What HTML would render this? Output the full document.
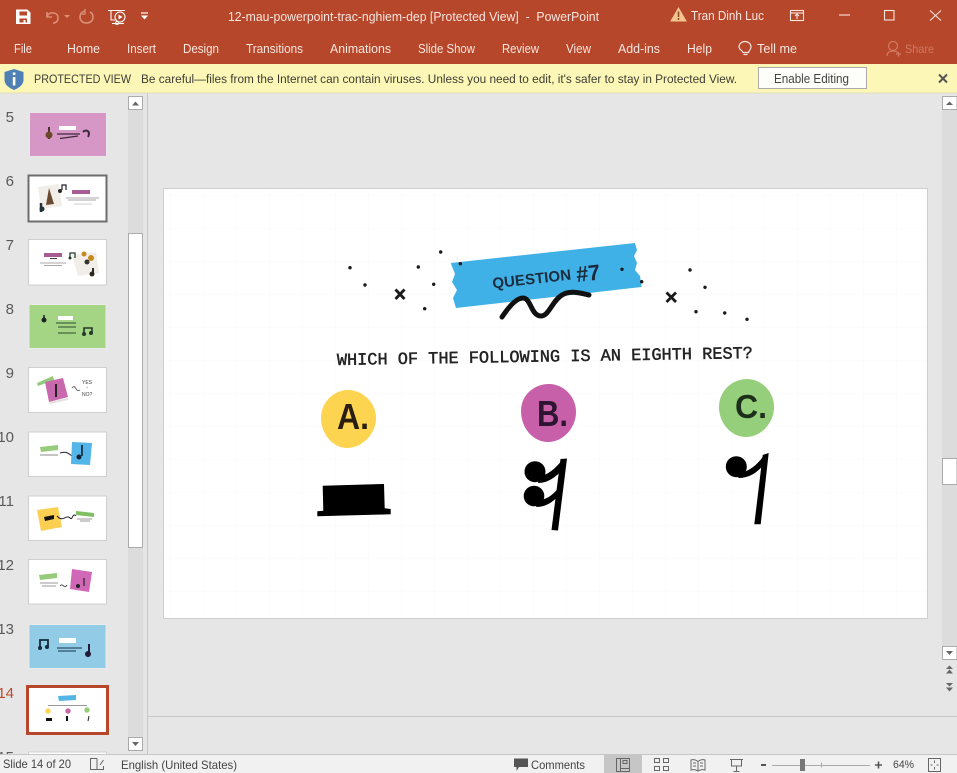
<!DOCTYPE html>
<html><head><meta charset="utf-8"><style>
html,body{margin:0;padding:0;background:#e6e6e6;overflow:hidden}
svg{display:block}
text{font-family:"Liberation Sans",sans-serif;font-size:12px}
.r text{fill:#f8e6e0;font-size:12.5px}
.y text{fill:#3d3d33;font-size:12.3px}
.s text{fill:#444}
.n{font-size:15px;fill:#5a5a5a;text-anchor:end}
</style></head><body>
<svg width="957" height="773" viewBox="0 0 957 773" xmlns="http://www.w3.org/2000/svg">
<defs>
<pattern id="g" width="33" height="33" patternUnits="userSpaceOnUse" x="170" y="195"><path d="M33 0H0V33" fill="none" stroke="#fafafa" stroke-width="1"/></pattern>
</defs>
<rect width="957" height="773" fill="#e6e6e6"/>

<!-- title bar -->
<rect width="957" height="64" fill="#b7472a"/>
<path fill-rule="evenodd" d="M16 9.500H27.500L30.500 12.500V24H16ZM19.500 11.500V15.500H27V11.500ZM19.500 18.500V22.500H27V18.500Z" fill="#fff"/>
<rect x="23.500" y="20" width="2" height="2.500" fill="#fff"/>
<g fill="none" stroke="#d98f78" stroke-width="1.600">
<path d="M47 12V17H52"/><path d="M47 16C50 11 58 12 58 18C58 21 56 23 53 23"/>
<path d="M64 15L70 15L67 18Z" fill="#d98f78" stroke="none"/>
<path d="M85 11C81 12 80 15 80 17C80 21 83 23 86.500 23C90 23 93 21 93 17C93 15 92 13 90 12"/><path d="M85 9V14H80" stroke-width="1.300"/>
</g>
<g fill="none" stroke="#fff" stroke-width="1.100">
<path d="M108 10.500H125"/><path d="M111 11V20H115"/><circle cx="120" cy="17" r="5"/><path d="M118.500 14.500L122.500 17L118.500 19.500Z" fill="#fff" stroke="none"/><path d="M112 23.500H124"/><circle cx="117" cy="23" r="1.500"/>
</g>
<path d="M141 13H148" stroke="#fff" stroke-width="1.200"/><path d="M141 15.500H148L144.500 19.500Z" fill="#fff"/>
<g class="r">
<text x="228" y="21" textLength="371" lengthAdjust="spacingAndGlyphs" xml:space="preserve">12-mau-powerpoint-trac-nghiem-dep [Protected View]  -  PowerPoint</text>
<text x="691" y="20" textLength="73" lengthAdjust="spacingAndGlyphs">Tran Dinh Luc</text>
<text x="14" y="53" textLength="18" lengthAdjust="spacingAndGlyphs">File</text>
<text x="67" y="53" textLength="33" lengthAdjust="spacingAndGlyphs">Home</text>
<text x="127" y="53" textLength="29" lengthAdjust="spacingAndGlyphs">Insert</text>
<text x="183" y="53" textLength="36" lengthAdjust="spacingAndGlyphs">Design</text>
<text x="246" y="53" textLength="57" lengthAdjust="spacingAndGlyphs">Transitions</text>
<text x="330" y="53" textLength="61" lengthAdjust="spacingAndGlyphs">Animations</text>
<text x="418" y="53" textLength="57" lengthAdjust="spacingAndGlyphs">Slide Show</text>
<text x="502" y="53" textLength="37" lengthAdjust="spacingAndGlyphs">Review</text>
<text x="566" y="53" textLength="25" lengthAdjust="spacingAndGlyphs">View</text>
<text x="618" y="53" textLength="42" lengthAdjust="spacingAndGlyphs">Add-ins</text>
<text x="687" y="53" textLength="25" lengthAdjust="spacingAndGlyphs">Help</text>
<text x="757" y="53" textLength="40" lengthAdjust="spacingAndGlyphs">Tell me</text>
</g>
<text x="905" y="53" textLength="29" lengthAdjust="spacingAndGlyphs" fill="#cf7a62">Share</text>
<g fill="none" stroke="#cf7a62" stroke-width="1.200"><circle cx="893" cy="46" r="4.500"/><path d="M887 56C887 52 890 51 893 51C896 51 898 52 899 54"/><path d="M896 54H901M898.500 52V56.500"/></g>
<path d="M745 41.500C748.500 41.500 751 44 751 47C751 49.500 749 50.500 748.500 52.500H743C742.500 50.500 739 49.500 739 47C739 44 741.500 41.500 745 41.500Z" fill="none" stroke="#f8e6e0" stroke-width="1.200"/>
<path d="M743.500 54.500H747.500" stroke="#f8e6e0" stroke-width="1.200"/>
<path d="M678.500 8L686 21H671Z" fill="#f2c48e" stroke="#f2c48e"/><path d="M678.500 11.500V17M678.500 18V20" stroke="#8a4a2a" stroke-width="1.500"/>
<g fill="none" stroke="#f8e6e0" stroke-width="1.100">
<rect x="790.500" y="10.500" width="13" height="10"/><path d="M790.500 13H803.500"/><path d="M797 19V14.500M795 16L797 14L799 16"/>
<path d="M839 15H850"/><rect x="884.500" y="10.500" width="9.500" height="9.500"/><path d="M930 10.500L941 20.500M941 10.500L930 20.500"/>
</g>

<!-- protected view bar -->
<rect y="64" width="957" height="28.500" fill="#fcf7b7"/>
<rect y="92.500" width="957" height="1" fill="#e0dfb8"/>
<path d="M14 69L23.500 72V80C23.500 84.500 19 88 14 90C9 88 4.500 84.500 4.500 80V72Z" fill="#4e7fb5"/>
<rect x="12.800" y="72.500" width="2.600" height="2.600" fill="#fff"/><rect x="12.800" y="77" width="2.600" height="8.500" fill="#fff"/>
<g class="y">
<text x="34" y="83" textLength="97" lengthAdjust="spacingAndGlyphs">PROTECTED VIEW</text>
<text x="141" y="83" textLength="596" lengthAdjust="spacingAndGlyphs">Be careful—files from the Internet can contain viruses. Unless you need to edit, it's safer to stay in Protected View.</text>
</g>
<rect x="758.500" y="67.500" width="108" height="21" fill="#fdfdfa" stroke="#ababab"/>
<text x="774" y="83" textLength="75" lengthAdjust="spacingAndGlyphs" fill="#444" style="font-size:12.500px">Enable Editing</text>
<path d="M939 74.500L947 82.500M947 74.500L939 82.500" stroke="#555" stroke-width="2"/>

<!-- left panel -->
<rect x="147" y="93" width="1" height="661" fill="#c9c9c9"/>
<rect x="128" y="96" width="15" height="655" fill="#dcdcdc"/>
<rect x="128.500" y="96.500" width="14" height="13" fill="#fff" stroke="#ababab"/>
<path d="M132 105.500H139L135.500 101.500Z" fill="#666"/>
<rect x="128.500" y="233.500" width="14" height="314" fill="#fff" stroke="#ababab"/>
<rect x="128.500" y="737.500" width="14" height="13" fill="#fff" stroke="#ababab"/>
<path d="M132 742H139L135.500 746Z" fill="#666"/>

<text class="n" x="14" y="122">5</text>
<text class="n" x="14" y="186">6</text>
<text class="n" x="14" y="250">7</text>
<text class="n" x="14" y="314">8</text>
<text class="n" x="14" y="378">9</text>
<text class="n" x="14" y="442">10</text>
<text class="n" x="14" y="506">11</text>
<text class="n" x="14" y="570">12</text>
<text class="n" x="14" y="634">13</text>
<text class="n" x="14" y="698" style="fill:#c0492b">14</text>
<text class="n" x="14" y="762">15</text>

<!-- thumb 5 -->
<rect x="29.500" y="112.500" width="77" height="44" fill="#d797c6" stroke="#e9e9e9"/>
<rect x="59" y="126" width="17" height="4" fill="#fff"/>
<path d="M57 134H80M60 138.500L78 136" stroke="#3c2a3c" stroke-width="1.200"/>
<path d="M49 127V139" stroke="#3a2a20" stroke-width="1.800"/><circle cx="49" cy="135" r="3.500" fill="#6a4a28"/>
<path d="M83 132C86 129 91 131 88 137" fill="none" stroke="#3c2a3c" stroke-width="2"/>
<!-- thumb 6 -->
<rect x="28.500" y="175.500" width="78" height="46" fill="#fff" stroke="#6d6d6d" stroke-width="2"/>
<path d="M38 187L59 184L62 206L41 209Z" fill="#f1eeea"/><path d="M46 205L49 188L54 204Z" fill="#6b4a32"/>
<circle cx="60" cy="191" r="2" fill="#2a2a2a"/><path d="M62 190V185H66V190" fill="none" stroke="#222" stroke-width="1.200"/>
<path d="M41 203V212" stroke="#24323a" stroke-width="2.500"/><circle cx="42" cy="209" r="2.500" fill="#24323a"/>
<rect x="72" y="190" width="18" height="4" fill="#a65d96"/>
<path d="M66 198H99M68 200H96" stroke="#aaa" stroke-width="1"/><path d="M74 204H92" stroke="#ccc"/>
<!-- thumb 7 -->
<rect x="28.500" y="239.500" width="78" height="45.500" fill="#fff" stroke="#cfcfcf"/>
<rect x="44" y="253" width="18" height="4" fill="#a65d96"/><path d="M50 258.500H57" stroke="#444"/>
<path d="M40 263H66M44 265.500H62" stroke="#aaa"/>
<path d="M72 255L96 252L99 273L78 276Z" fill="#f1eeea"/><circle cx="84" cy="254" r="2.500" fill="#c58a1e"/><circle cx="91" cy="258" r="3" fill="#c58a1e"/><circle cx="87" cy="262" r="2.500" fill="#333"/>
<path d="M70 258V253H75V258" fill="none" stroke="#2a3a2a" stroke-width="1.300"/><circle cx="70" cy="258" r="1.500" fill="#2a3a2a"/>
<circle cx="92" cy="274" r="2.500" fill="#2a2a1f"/><path d="M93 268V274" stroke="#2a2a1f" stroke-width="2"/>
<!-- thumb 8 -->
<rect x="29" y="304.500" width="77" height="44" fill="#a3d585" stroke="#eaeaea"/>
<rect x="58" y="316" width="15" height="4" fill="#fff"/><path d="M56 323H76M58 327H76M58 333H76" stroke="#2f4a2a"/>
<circle cx="44" cy="320" r="2.500" fill="#222"/><path d="M44 315V322" stroke="#222" stroke-width="1.500"/>
<path d="M84 334V328H92V334" fill="none" stroke="#243a2a" stroke-width="1.600"/><circle cx="84" cy="334" r="2" fill="#243a2a"/><circle cx="91" cy="333" r="2" fill="#243a2a"/>
<!-- thumb 9 -->
<rect x="28.500" y="367.500" width="78" height="45" fill="#fff" stroke="#cfcfcf"/>
<path d="M37 383L53 376L54 380L38 386Z" fill="#93c97a"/>
<path d="M45 382L63 378L68 397L49 402Z" fill="#c968ad"/><path d="M56 384V397" stroke="#222" stroke-width="2"/>
<path d="M49 402L68 398L68 400L50 404Z" fill="#e4e0de"/>
<path d="M72 388C76 383 75 393 80 390" fill="none" stroke="#666"/>
<text x="82" y="384" style="font-size:5px" fill="#444">YES</text><text x="86" y="389" style="font-size:4px" fill="#777">+</text><text x="82" y="396" style="font-size:5px" fill="#444">NO?</text>
<!-- thumb 10 -->
<rect x="28.500" y="432" width="78" height="44.500" fill="#fff" stroke="#cfcfcf"/>
<path d="M40 447L58 445L58 450L41 452Z" fill="#97cb7c"/><path d="M40 455H58" stroke="#888"/>
<path d="M60 453C66 451 68 453 72 456" fill="none" stroke="#223" stroke-width="1"/>
<path d="M72 442L92 443L90 465L71 464Z" fill="#54b5e9"/><circle cx="79" cy="457" r="2.500" fill="#123"/><path d="M82 445V456" stroke="#123" stroke-width="1.600"/>
<!-- thumb 11 -->
<rect x="28.500" y="496" width="78" height="44.500" fill="#fff" stroke="#cfcfcf"/>
<path d="M37 510L58 507L62 527L41 531Z" fill="#fbd052"/><path d="M44 517L54 515L54 519L45 521Z" fill="#111"/>
<path d="M57 516C63 523 66 514 70 518C73 521 72 512 76 516" fill="none" stroke="#222" stroke-width="1"/>
<path d="M76 511L94 513L94 517L76 515Z" fill="#7fc063"/><path d="M77 519H92M80 521H90" stroke="#999"/>
<!-- thumb 12 -->
<rect x="28.500" y="559.500" width="78" height="44.500" fill="#fff" stroke="#cfcfcf"/>
<path d="M39 575L57 573L57 578L40 580Z" fill="#97cb7c"/><path d="M40 583H58M42 586H56" stroke="#999"/>
<path d="M60 586C63 582 64 590 67 585" fill="none" stroke="#555"/>
<path d="M72 569L92 572L89 592L70 589Z" fill="#d168b7"/><circle cx="78" cy="586" r="2" fill="#222"/><path d="M84 578V586" stroke="#222" stroke-width="1.200"/>
<!-- thumb 13 -->
<rect x="29" y="624.500" width="77" height="44" fill="#92cbe6" stroke="#eaeaea"/>
<rect x="59" y="638" width="17" height="5" fill="#fff"/><path d="M57 648H82M58 651H76" stroke="#16324a"/>
<path d="M40 647V640H48V646" fill="none" stroke="#132b3c" stroke-width="1.800"/><circle cx="40" cy="648" r="2" fill="#132b3c"/><circle cx="47" cy="647" r="2" fill="#132b3c"/>
<path d="M89 644V654" stroke="#231b3a" stroke-width="2"/><circle cx="88" cy="654" r="3" fill="#231b3a"/>
<!-- thumb 14 -->
<rect x="27.500" y="686.500" width="80" height="47" fill="#fff" stroke="#b7472a" stroke-width="3"/>
<path d="M58 696L76 695L76 700L59 701Z" fill="#52b5e6"/><path d="M48 705.500H87" stroke="#999"/>
<circle cx="48" cy="711" r="2.700" fill="#fbd452"/><circle cx="68" cy="711" r="2.700" fill="#c868a8"/><circle cx="87" cy="710" r="2.700" fill="#97cd7c"/>
<rect x="46" y="718" width="6" height="3" fill="#111"/><path d="M67 716V721" stroke="#111" stroke-width="2"/><path d="M89 716L88 721" stroke="#222"/>
<!-- thumb 15 -->
<rect x="28.500" y="752" width="78" height="10" fill="#fff" stroke="#cfcfcf"/>

<!-- right scrollbar -->
<rect x="942" y="96" width="15" height="564" fill="#dcdcdc"/>
<rect x="942.500" y="96.500" width="14.500" height="13" fill="#fff" stroke="#ababab"/>
<path d="M946 105H953L949.500 101.500Z" fill="#666"/>
<rect x="942.500" y="458.500" width="14.500" height="26" fill="#fff" stroke="#ababab"/>
<rect x="942.500" y="646.500" width="14.500" height="13" fill="#fff" stroke="#ababab"/>
<path d="M946 651H953L949.500 655Z" fill="#666"/>
<path d="M946 669H953L949.500 665.500ZM946 673.500H953L949.500 669.500Z" fill="#666"/>
<path d="M946 683H953L949.500 686.500ZM946 687.500H953L949.500 691.500Z" fill="#666"/>

<!-- notes divider -->
<rect x="148" y="716" width="809" height="1" fill="#c8c8c8"/>

<!-- slide -->
<rect x="163.500" y="188.500" width="764" height="430" fill="#fff" stroke="#cfcfcf"/>
<rect x="165" y="190" width="762" height="428" fill="url(#g)"/>

<path d="M450.700 263L635 243L637 250L634 256L637 263L635 270L640 276L641.700 287L456 308L453 298L457 290L452 282L455 274Z" fill="#3fb1e7"/>
<text transform="translate(493 288.500) rotate(-6.500)" style="font-size:15px;font-weight:bold" fill="#1b2b3c" textLength="79" lengthAdjust="spacing">QUESTION</text>
<text transform="translate(577 282) rotate(-6)" style="font-size:22px;font-weight:bold" fill="#1b2b3c" textLength="24" lengthAdjust="spacingAndGlyphs">#7</text>
<path d="M502 317C508 308 516 298 523 298C531 298 531 316 541 316C549 316 552 301 562 295C570 290 580 293 589 295" fill="none" stroke="#111" stroke-width="5" stroke-linecap="round"/>

<g fill="#1a1a1a">
<circle cx="350" cy="267.700" r="1.700"/><circle cx="365" cy="285" r="1.700"/><circle cx="418.300" cy="267" r="1.700"/><circle cx="440.700" cy="252" r="1.700"/><circle cx="433.700" cy="284.300" r="1.700"/><circle cx="424.700" cy="308.700" r="1.700"/><circle cx="460.300" cy="263.700" r="1.700"/><circle cx="622" cy="269.300" r="1.700"/><circle cx="641.700" cy="281.700" r="1.700"/><circle cx="690" cy="270" r="1.700"/><circle cx="705" cy="287.300" r="1.700"/><circle cx="696" cy="311.700" r="1.700"/><circle cx="724.700" cy="313" r="1.700"/><circle cx="747" cy="319.300" r="1.700"/>
</g>
<path d="M395.500 289.500L404.500 299M404.500 289.500L395.500 299" stroke="#1a1a1a" stroke-width="2.800"/>
<path d="M666.500 292.500L676 302M676 292.500L666.500 302" stroke="#1a1a1a" stroke-width="2.800"/>

<text transform="translate(337 365) rotate(-0.950)" style="font-family:'Liberation Mono',monospace;font-size:17px;stroke:#222;stroke-width:.45px" fill="#222" textLength="416" lengthAdjust="spacingAndGlyphs">WHICH OF THE FOLLOWING IS AN EIGHTH REST?</text>

<!-- blobs -->
<path d="M348 390C362 390 376 402 376 418C376 434 362 448 347 448C333 448 321 434 321 418C321 402 334 390 348 390Z" fill="#fdd450"/>
<path d="M549 384C563 384 576 396 576 412C576 428 563 442 548 442C533 442 521 428 521 411C521 395 534 384 549 384Z" fill="#c860a9"/>
<path d="M747 379C761 379 774 391 774 407C774 423 761 437 746 437C731 437 719 423 719 407C719 391 732 379 747 379Z" fill="#95cf7b"/>
<text x="337" y="429" style="font-size:36px;font-weight:bold" fill="#2a1e12" textLength="32" lengthAdjust="spacingAndGlyphs">A.</text>
<text x="537" y="426" style="font-size:36px;font-weight:bold" fill="#2d1430" textLength="31" lengthAdjust="spacingAndGlyphs">B.</text>
<text x="735" y="418" style="font-size:33px;font-weight:bold" fill="#1d2e1b" textLength="32" lengthAdjust="spacingAndGlyphs">C.</text>

<!-- rests -->
<path d="M322.700 485.700L384 484L384.700 508.300L390.700 509L390.700 514.300L317.300 516.300L317.300 511.300L323.300 510.700Z" fill="#000"/>
<circle cx="535" cy="471.700" r="10.500" fill="#000"/><circle cx="534" cy="496" r="10.300" fill="#000"/>
<path d="M567 458.500L560.500 459L551.500 530L558 530.500Z" fill="#000"/>
<path d="M540 476C548 475 556 468 562 460L563 469C556 477 548 483 538 483Z" fill="#000"/>
<path d="M540 500C548 499 554 494 560 486L559 495C554 501 547 507 536 507Z" fill="#000"/>
<circle cx="736.300" cy="466.700" r="10.500" fill="#000"/>
<path d="M768.700 453L762.700 455L754.300 524.300L760.700 524.300Z" fill="#000"/>
<path d="M742 472C750 471 758 464 765 454L765 463C758 472 750 478 738 478Z" fill="#000"/>

<!-- status bar -->
<rect y="754" width="957" height="19" fill="#f1f1f1"/>
<rect y="754" width="957" height="1" fill="#c6c6c6"/>
<g class="s">
<text x="3" y="768" textLength="68" lengthAdjust="spacingAndGlyphs">Slide 14 of 20</text>
<text x="121" y="769" textLength="116" lengthAdjust="spacingAndGlyphs">English (United States)</text>
<text x="531" y="769" textLength="54" lengthAdjust="spacingAndGlyphs">Comments</text>
<text x="893" y="768" textLength="21" lengthAdjust="spacingAndGlyphs" style="font-size:11px">64%</text>
</g>
<g fill="none" stroke="#666" stroke-width="1">
<path d="M97 758.500H90.500V769.500H97V758.500M97 769.500H103.500V766M103.500 760L100 765" />
</g>
<path d="M514 758.500H528V767H519L516.500 771V767H514Z" fill="#555"/>
<rect x="604" y="755" width="38" height="18" fill="#c6c6c6"/>
<g fill="none" stroke="#666" stroke-width="1">
<rect x="616.500" y="758.500" width="13" height="13"/><path d="M620.500 758.500V771.500M620.500 768.500H629.500"/><rect x="623" y="760.500" width="4" height="3"/>
<rect x="654.500" y="758.500" width="5" height="4"/><rect x="663.500" y="758.500" width="5" height="4"/><rect x="654.500" y="766.500" width="5" height="4"/><rect x="663.500" y="766.500" width="5" height="4"/>
<path d="M691 760C694 759 696 760 698 761.500C700 760 702 759 705 760V770C702 769 700 770 698 771C696 770 694 769 691 770ZM698 761.500V771M693 763H696M693 766H696M700 763H703M700 766H703"/>
<path d="M730 759.500H743M731.500 760V766H741.500V760M736.500 766V771M733.500 771.500H739.500"/>
<rect x="928.500" y="758.500" width="12" height="13"/><path d="M934.500 760.500V763M934.500 767V769.500M930.500 765H932.500M936.500 765H938.500"/>
</g>
<rect x="761" y="764" width="5" height="2" fill="#555"/>
<rect x="772" y="765" width="98" height="1" fill="#aaa"/>
<rect x="821" y="762.500" width="1" height="5" fill="#aaa"/>
<rect x="800" y="759" width="5" height="12" fill="#777"/>
<path d="M875 765H882M878.500 761.500V768.500" stroke="#555" stroke-width="1.600"/>
</svg>
</body></html>
